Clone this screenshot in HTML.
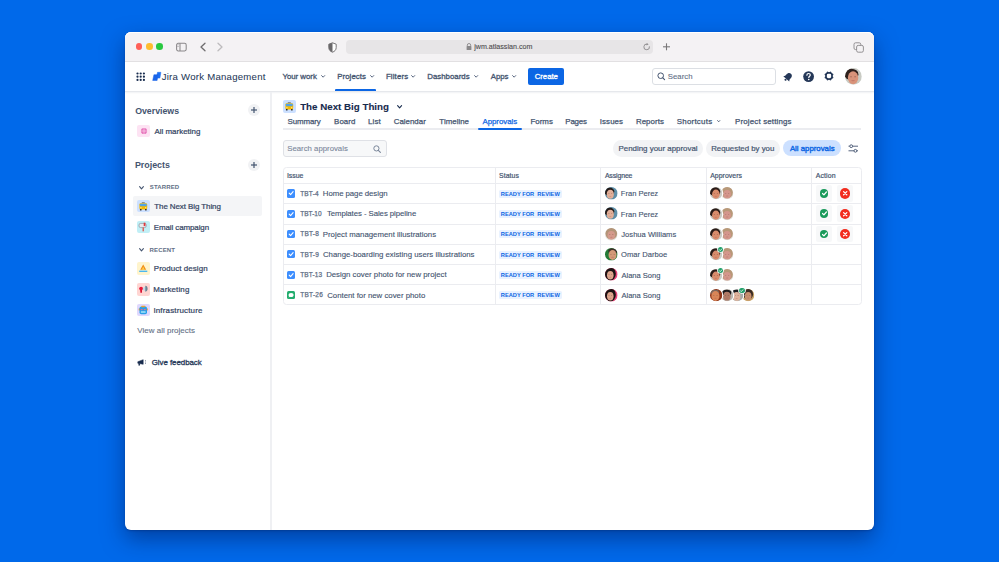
<!DOCTYPE html>
<html><head><meta charset="utf-8"><style>
html,body{margin:0;padding:0;width:999px;height:562px;overflow:hidden;}
body{background:#0069ea;position:relative;font-family:"Liberation Sans",sans-serif;}
.t{position:absolute;white-space:nowrap;line-height:normal;font-family:"Liberation Sans",sans-serif;}
svg{overflow:visible;}
</style></head><body>
<div style="position:absolute;left:125px;top:32px;width:749px;height:497.5px;background:#fff;border-radius:6px;box-shadow:0 9px 22px rgba(0,25,90,.5),0 1px 2px rgba(0,25,90,.3);"></div>
<div style="position:absolute;left:125px;top:32px;width:749px;height:30px;background:#f4f2f4;border-radius:6px 6px 0 0;border-bottom:1px solid #e2e0e2;box-sizing:border-box;box-shadow:inset 0 1px 0 #fff;"></div>
<div style="position:absolute;left:135.7px;top:43.400000000000006px;width:6.600000000000023px;height:6.599999999999994px;background:#ff5f57;border-radius:50%;"></div>
<div style="position:absolute;left:146.0px;top:43.400000000000006px;width:6.600000000000023px;height:6.599999999999994px;background:#febc2e;border-radius:50%;"></div>
<div style="position:absolute;left:156.39999999999998px;top:43.400000000000006px;width:6.600000000000023px;height:6.599999999999994px;background:#28c840;border-radius:50%;"></div>
<svg style="position:absolute;left:175px;top:42px;" width="13" height="10" viewBox="0 0 13 10"><rect x="1.6" y="1.3" width="9.6" height="7.6" rx="1.6" fill="none" stroke="#8a888a" stroke-width="1.05"/><line x1="5" y1="1.3" x2="5" y2="8.9" stroke="#8a888a" stroke-width="1.05"/><rect x="2.2" y="2.4" width="1.6" height="0.8" fill="#b0aeb0"/><rect x="2.2" y="4.1" width="1.6" height="0.8" fill="#b0aeb0"/></svg>
<svg style="position:absolute;left:199px;top:42px;" width="8" height="10" viewBox="0 0 8 10"><polyline points="6,1.2 2,5 6,8.8" fill="none" stroke="#6e6c6e" stroke-width="1.3" stroke-linecap="round" stroke-linejoin="round"/></svg>
<svg style="position:absolute;left:216px;top:42px;" width="8" height="10" viewBox="0 0 8 10"><polyline points="2,1.2 6,5 2,8.8" fill="none" stroke="#bdbbbd" stroke-width="1.3" stroke-linecap="round" stroke-linejoin="round"/></svg>
<svg style="position:absolute;left:328px;top:41.5px;" width="9" height="11" viewBox="0 0 9 11"><path d="M4.5 0.8 L8.2 2.2 L8.2 5.6 C8.2 8 6.6 9.4 4.5 10.2 C2.4 9.4 0.8 8 0.8 5.6 L0.8 2.2 Z" fill="#fff" stroke="#6a686a" stroke-width="0.9"/><path d="M4.5 0.8 L0.8 2.2 L0.8 5.6 C0.8 8 2.4 9.4 4.5 10.2 Z" fill="#6a686a"/></svg>
<div style="position:absolute;left:346px;top:40px;width:307px;height:14px;background:#e7e5e7;border-radius:4px;"></div>
<svg style="position:absolute;left:466px;top:43px;" width="6" height="7.5" viewBox="0 0 6 7.5"><path d="M1.3 3.2 V2.2 A1.7 1.7 0 0 1 4.7 2.2 V3.2" fill="none" stroke="#8a888a" stroke-width="0.9"/><rect x="0.6" y="3.1" width="4.8" height="3.9" rx="0.6" fill="#8a888a"/></svg>
<div class="t" style="left:474.16px;top:42.94px;font-size:7.134px;font-weight:400;color:#4d4b4d;-webkit-text-stroke:0.1px #4d4b4d;">jwm.atlassian.com</div>
<svg style="position:absolute;left:643px;top:43px;" width="8" height="8" viewBox="0 0 8 8"><path d="M6.4 3.4 A2.8 2.8 0 1 1 4.2 1.2" fill="none" stroke="#8a888a" stroke-width="0.9"/><path d="M3.6 0 L5.6 1.3 L3.6 2.6 Z" fill="#8a888a"/></svg>
<svg style="position:absolute;left:662px;top:43px;" width="9" height="8" viewBox="0 0 9 8"><line x1="4.5" y1="0.3" x2="4.5" y2="7.3" stroke="#7a787a" stroke-width="1.1"/><line x1="1" y1="3.8" x2="8" y2="3.8" stroke="#7a787a" stroke-width="1.1"/></svg>
<svg style="position:absolute;left:853px;top:41.5px;" width="12" height="11" viewBox="0 0 12 11"><rect x="1" y="0.8" width="6.8" height="6.8" rx="1.6" fill="#f4f2f4" stroke="#8a888a" stroke-width="0.9"/><rect x="3.6" y="3.4" width="6.8" height="6.8" rx="1.6" fill="#f4f2f4" stroke="#8a888a" stroke-width="0.9"/></svg>
<div style="position:absolute;left:125px;top:91px;width:749px;height:1px;background:#e6e8ec;box-shadow:0 1px 1.5px rgba(9,30,66,.07);"></div>
<svg style="position:absolute;left:135.8px;top:71.8px;" width="9.5" height="9.5" viewBox="0 0 9.5 9.5"><circle cx="1.50" cy="1.50" r="1.1" fill="#172b4d"/><circle cx="1.50" cy="4.70" r="1.1" fill="#172b4d"/><circle cx="1.50" cy="7.90" r="1.1" fill="#172b4d"/><circle cx="4.70" cy="1.50" r="1.1" fill="#172b4d"/><circle cx="4.70" cy="4.70" r="1.1" fill="#172b4d"/><circle cx="4.70" cy="7.90" r="1.1" fill="#172b4d"/><circle cx="7.90" cy="1.50" r="1.1" fill="#172b4d"/><circle cx="7.90" cy="4.70" r="1.1" fill="#172b4d"/><circle cx="7.90" cy="7.90" r="1.1" fill="#172b4d"/></svg>
<svg style="position:absolute;left:151.5px;top:71.5px;" width="9.5" height="9" viewBox="0 0 9.5 9"><path d="M5.5 0.3 L8.9 0.3 L7.9 6.1 L4.3 6.1 Z" fill="#1d6ff2" stroke="#1d6ff2" stroke-width="0.5" stroke-linejoin="round"/><path d="M1.9 2.7 L6.1 2.7 L5.1 8.5 L0.7 8.5 Z" fill="#1a64e8" stroke="#1a64e8" stroke-width="0.5" stroke-linejoin="round"/></svg>
<div class="t" style="left:161.63px;top:70.81px;font-size:9.600px;font-weight:400;color:#253858;-webkit-text-stroke:0.05px #253858;letter-spacing:0.251px;">Jira Work Management</div>
<div class="t" style="left:282.49px;top:72.20px;font-size:7.850px;font-weight:400;color:#44546f;-webkit-text-stroke:0.3px #44546f;letter-spacing:-0.033px;">Your work</div>
<svg style="position:absolute;left:320.8px;top:75.4px;" width="4.3" height="3.0" viewBox="0 0 4.3 3.0"><polyline points="0.6,0.6 2.15,2.2 3.6999999999999997,0.6" fill="none" stroke="#44546f" stroke-width="0.9" stroke-linecap="round" stroke-linejoin="round"/></svg>
<div class="t" style="left:337.32px;top:72.20px;font-size:7.850px;font-weight:400;color:#44546f;-webkit-text-stroke:0.3px #44546f;letter-spacing:0.032px;">Projects</div>
<svg style="position:absolute;left:369.8px;top:75.4px;" width="4.3" height="3.0" viewBox="0 0 4.3 3.0"><polyline points="0.6,0.6 2.15,2.2 3.6999999999999997,0.6" fill="none" stroke="#44546f" stroke-width="0.9" stroke-linecap="round" stroke-linejoin="round"/></svg>
<div class="t" style="left:385.92px;top:72.20px;font-size:7.850px;font-weight:400;color:#44546f;-webkit-text-stroke:0.3px #44546f;letter-spacing:0.135px;">Filters</div>
<svg style="position:absolute;left:411.0px;top:75.4px;" width="4.3" height="3.0" viewBox="0 0 4.3 3.0"><polyline points="0.6,0.6 2.15,2.2 3.6999999999999997,0.6" fill="none" stroke="#44546f" stroke-width="0.9" stroke-linecap="round" stroke-linejoin="round"/></svg>
<div class="t" style="left:427.32px;top:72.20px;font-size:7.850px;font-weight:400;color:#44546f;-webkit-text-stroke:0.3px #44546f;letter-spacing:-0.005px;">Dashboards</div>
<svg style="position:absolute;left:473.8px;top:75.4px;" width="4.3" height="3.0" viewBox="0 0 4.3 3.0"><polyline points="0.6,0.6 2.15,2.2 3.6999999999999997,0.6" fill="none" stroke="#44546f" stroke-width="0.9" stroke-linecap="round" stroke-linejoin="round"/></svg>
<div class="t" style="left:490.75px;top:72.20px;font-size:7.850px;font-weight:400;color:#44546f;-webkit-text-stroke:0.3px #44546f;letter-spacing:-0.061px;">Apps</div>
<svg style="position:absolute;left:512.0px;top:75.4px;" width="4.3" height="3.0" viewBox="0 0 4.3 3.0"><polyline points="0.6,0.6 2.15,2.2 3.6999999999999997,0.6" fill="none" stroke="#44546f" stroke-width="0.9" stroke-linecap="round" stroke-linejoin="round"/></svg>
<div style="position:absolute;left:335px;top:89px;width:40.60000000000002px;height:2px;background:#0c66e4;border-radius:1px 1px 0 0;"></div>
<div style="position:absolute;left:528px;top:68.3px;width:36.39999999999998px;height:16.700000000000003px;background:#0c66e4;border-radius:2px;"></div>
<div class="t" style="left:534.66px;top:72.24px;font-size:7.800px;font-weight:400;color:#fff;-webkit-text-stroke:0.3px #fff;letter-spacing:-0.020px;">Create</div>
<div style="position:absolute;left:651.5px;top:68px;width:124.0px;height:16.5px;border:1px solid #dcdfe4;border-radius:3px;box-sizing:border-box;background:#fff;"></div>
<svg style="position:absolute;left:656.5px;top:72.2px;" width="9" height="9" viewBox="0 0 9 9"><circle cx="3.7" cy="3.7" r="2.8" fill="none" stroke="#44546f" stroke-width="1.0"/><line x1="5.8" y1="5.8" x2="7.6" y2="7.6" stroke="#44546f" stroke-width="1.1" stroke-linecap="round"/></svg>
<div class="t" style="left:667.86px;top:71.87px;font-size:7.770px;font-weight:400;color:#626f86;-webkit-text-stroke:0.1px #626f86;">Search</div>
<svg style="position:absolute;left:783px;top:71.5px;" width="10" height="10" viewBox="0 0 10 10"><g transform="rotate(42 5 5)"><path d="M5 0.6 C3 0.6 2.1 2.2 2.1 4.2 L2.1 6 L1 7.6 L9 7.6 L7.9 6 L7.9 4.2 C7.9 2.2 7 0.6 5 0.6 Z" fill="#253858"/><circle cx="5" cy="8.7" r="1.05" fill="#253858"/></g></svg>
<svg style="position:absolute;left:803px;top:71px;" width="11.5" height="11.5" viewBox="0 0 11.5 11.5"><circle cx="5.6" cy="5.6" r="5.4" fill="#253858"/><path d="M3.9 4.2 C3.9 3.1 4.7 2.5 5.6 2.5 C6.6 2.5 7.3 3.1 7.3 4 C7.3 5.2 5.8 5.2 5.8 6.5" fill="none" stroke="#fff" stroke-width="1.2" stroke-linecap="round"/><circle cx="5.75" cy="8.5" r="0.8" fill="#fff"/></svg>
<svg style="position:absolute;left:824.2px;top:71.4px;" width="10" height="10" viewBox="0 0 10 10"><rect x="4.2" y="0.4" width="1.6" height="2.2" rx="0.3" fill="#253858" transform="rotate(22.5 5 5)"/><rect x="4.2" y="0.4" width="1.6" height="2.2" rx="0.3" fill="#253858" transform="rotate(67.5 5 5)"/><rect x="4.2" y="0.4" width="1.6" height="2.2" rx="0.3" fill="#253858" transform="rotate(112.5 5 5)"/><rect x="4.2" y="0.4" width="1.6" height="2.2" rx="0.3" fill="#253858" transform="rotate(157.5 5 5)"/><rect x="4.2" y="0.4" width="1.6" height="2.2" rx="0.3" fill="#253858" transform="rotate(202.5 5 5)"/><rect x="4.2" y="0.4" width="1.6" height="2.2" rx="0.3" fill="#253858" transform="rotate(247.5 5 5)"/><rect x="4.2" y="0.4" width="1.6" height="2.2" rx="0.3" fill="#253858" transform="rotate(292.5 5 5)"/><rect x="4.2" y="0.4" width="1.6" height="2.2" rx="0.3" fill="#253858" transform="rotate(337.5 5 5)"/><circle cx="5" cy="5" r="3.15" fill="none" stroke="#253858" stroke-width="1.5"/></svg>
<svg style="position:absolute;left:845.10px;top:68.10px;overflow:visible" width="16.8" height="16.8" viewBox="0 0 100 100"><defs><clipPath id="av1"><circle cx="50" cy="50" r="50"/></clipPath></defs><g clip-path="url(#av1)"><rect width="100" height="100" fill="#c9cbc4"/><ellipse cx="38" cy="38" rx="42" ry="34" fill="#2e201c"/><ellipse cx="48" cy="58" rx="31" ry="38" fill="#d9937a"/><ellipse cx="35.6" cy="52.3" rx="5.6" ry="3.0" fill="#6a4236" opacity=".55"/><ellipse cx="60.4" cy="52.3" rx="5.6" ry="3.0" fill="#6a4236" opacity=".55"/><ellipse cx="48" cy="75.1" rx="10.8" ry="3.8" fill="#b0605a" opacity=".5"/></g></svg>
<div style="position:absolute;left:270.3px;top:92px;width:2.0px;height:437.5px;background:#eff0f3;"></div>
<div class="t" style="left:135.15px;top:105.54px;font-size:8.791px;font-weight:700;color:#44546f;">Overviews</div>
<div style="position:absolute;left:248px;top:104px;width:12px;height:12px;background:#f1f2f4;border-radius:50%;"></div>
<svg style="position:absolute;left:250px;top:106px;" width="8" height="8" viewBox="0 0 8 8"><line x1="4" y1="1" x2="4" y2="7" stroke="#44546f" stroke-width="1.2"/><line x1="1" y1="4" x2="7" y2="4" stroke="#44546f" stroke-width="1.2"/></svg>
<div style="position:absolute;left:137.3px;top:124.7px;width:12.5px;height:12.600000000000009px;background:#fde3f3;border-radius:2px;"></div>
<svg style="position:absolute;left:139.5px;top:127px;" width="8" height="8" viewBox="0 0 8 8"><circle cx="4" cy="4" r="3.1" fill="#e774bb"/><line x1="0.9" y1="4" x2="7.1" y2="4" stroke="#fde3f3" stroke-width="0.6"/><line x1="4" y1="0.9" x2="4" y2="7.1" stroke="#fde3f3" stroke-width="0.6"/></svg>
<div class="t" style="left:154.41px;top:127.11px;font-size:7.950px;font-weight:400;color:#344563;-webkit-text-stroke:0.22px #344563;letter-spacing:0.007px;">All marketing</div>
<div class="t" style="left:134.88px;top:159.64px;font-size:8.906px;font-weight:700;color:#44546f;">Projects</div>
<div style="position:absolute;left:248px;top:158.7px;width:12px;height:12.0px;background:#f1f2f4;border-radius:50%;"></div>
<svg style="position:absolute;left:250px;top:160.7px;" width="8" height="8" viewBox="0 0 8 8"><line x1="4" y1="1" x2="4" y2="7" stroke="#44546f" stroke-width="1.2"/><line x1="1" y1="4" x2="7" y2="4" stroke="#44546f" stroke-width="1.2"/></svg>
<svg style="position:absolute;left:139.0px;top:185.5px;" width="5" height="3.6" viewBox="0 0 5 3.6"><polyline points="0.6,0.6 2.5,2.8000000000000003 4.4,0.6" fill="none" stroke="#44546f" stroke-width="1.1" stroke-linecap="round" stroke-linejoin="round"/></svg>
<div class="t" style="left:149.82px;top:184.34px;font-size:6.029px;font-weight:700;color:#626f86;letter-spacing:0.121px;">STARRED</div>
<div style="position:absolute;left:133.3px;top:195.8px;width:128.7px;height:20.5px;background:#f4f5f7;border-radius:2px;"></div>
<div style="position:absolute;left:137.3px;top:199.8px;width:12.5px;height:12.5px;background:#cce0ff;border-radius:2px;"></div>
<svg style="position:absolute;left:137.3px;top:199.8px;" width="12.5" height="12.5" viewBox="0 0 12.5 12.5"><rect x="4.7" y="2.1" width="3.2" height="1.3" rx="0.4" fill="#8a8f98"/><rect x="2.4" y="3.2" width="7.8" height="6.2" rx="1.3" fill="#f5b800"/><rect x="2.9" y="3.8" width="6.8" height="2.4" rx="0.7" fill="#4fa3e6"/><rect x="2.9" y="9.1" width="1.7" height="1.3" rx="0.3" fill="#2b2b2b"/><rect x="8" y="9.1" width="1.7" height="1.3" rx="0.3" fill="#2b2b2b"/><rect x="3.3" y="7.3" width="1.2" height="0.9" fill="#fff3c0"/><rect x="8.1" y="7.3" width="1.2" height="0.9" fill="#fff3c0"/></svg>
<div class="t" style="left:154.25px;top:202.11px;font-size:7.950px;font-weight:400;color:#344563;-webkit-text-stroke:0.22px #344563;letter-spacing:-0.069px;">The Next Big Thing</div>
<div style="position:absolute;left:137.3px;top:220.8px;width:12.5px;height:12.5px;background:#c1eff6;border-radius:2px;"></div>
<svg style="position:absolute;left:137.3px;top:220.8px;" width="12.5" height="12.5" viewBox="0 0 12.5 12.5"><rect x="2" y="2.4" width="7.2" height="4.2" rx="1.6" fill="#e8eaee" stroke="#8d939c" stroke-width="0.7"/><rect x="6.7" y="1.7" width="1.7" height="3.4" fill="#e2383d"/><rect x="5.6" y="6.5" width="1.2" height="3.8" fill="#e2483d"/></svg>
<div class="t" style="left:153.77px;top:222.61px;font-size:7.950px;font-weight:400;color:#344563;-webkit-text-stroke:0.22px #344563;letter-spacing:-0.087px;">Email campaign</div>
<svg style="position:absolute;left:139.0px;top:248.2px;" width="5" height="3.6" viewBox="0 0 5 3.6"><polyline points="0.6,0.6 2.5,2.8000000000000003 4.4,0.6" fill="none" stroke="#44546f" stroke-width="1.1" stroke-linecap="round" stroke-linejoin="round"/></svg>
<div class="t" style="left:149.58px;top:246.52px;font-size:6.053px;font-weight:700;color:#626f86;letter-spacing:0.121px;">RECENT</div>
<div style="position:absolute;left:137.3px;top:262.2px;width:12.5px;height:12.5px;background:#fff4cc;border-radius:2px;"></div>
<svg style="position:absolute;left:137.3px;top:262.2px;" width="12.5" height="12.5" viewBox="0 0 12.5 12.5"><path d="M6.2 2.5 L9.2 7.8 L3.2 7.8 Z" fill="#f18d13"/><path d="M6.2 4.6 L7.6 7.8 L4.8 7.8 Z" fill="#ffd24d"/><rect x="2.2" y="8.6" width="8.1" height="1.4" fill="#4bb8ef"/></svg>
<div class="t" style="left:153.77px;top:264.31px;font-size:7.950px;font-weight:400;color:#344563;-webkit-text-stroke:0.22px #344563;letter-spacing:0.067px;">Product design</div>
<div style="position:absolute;left:137.3px;top:283px;width:12.5px;height:12.5px;background:#ffd5d2;border-radius:2px;"></div>
<svg style="position:absolute;left:137.3px;top:283px;" width="12.5" height="12.5" viewBox="0 0 12.5 12.5"><circle cx="4.1" cy="5.6" r="1.9" fill="#e8173a"/><rect x="3.3" y="6.8" width="1.7" height="3" rx="0.5" fill="#d90f30"/><path d="M5.8 5.4 L8.7 2.9 L8.7 8.5 L5.8 6.6 Z" fill="#bfdbe6"/><path d="M8.3 2.7 C10.2 2.8 10.6 4.6 10.6 5.7 C10.6 6.8 10.2 8.5 8.3 8.7 Z" fill="#6a8392"/></svg>
<div class="t" style="left:153.37px;top:284.51px;font-size:7.950px;font-weight:400;color:#344563;-webkit-text-stroke:0.22px #344563;letter-spacing:0.137px;">Marketing</div>
<div style="position:absolute;left:137.3px;top:303.8px;width:12.5px;height:12.5px;background:#dfd8fd;border-radius:2px;"></div>
<svg style="position:absolute;left:137.3px;top:303.8px;" width="12.5" height="12.5" viewBox="0 0 12.5 12.5"><rect x="1.7" y="4.2" width="1.4" height="2.3" rx="0.6" fill="#f0a030"/><rect x="9.4" y="4.2" width="1.4" height="2.3" rx="0.6" fill="#f0a030"/><rect x="2.5" y="2.5" width="7.5" height="7.8" rx="1.8" fill="#2a9fe8"/><rect x="4.2" y="1.8" width="4.2" height="1.4" rx="0.7" fill="#e9a23b"/><rect x="3.7" y="4.9" width="2" height="1.3" rx="0.6" fill="#f06a8a"/><rect x="6.9" y="4.9" width="2" height="1.3" rx="0.6" fill="#f06a8a"/><rect x="3.8" y="7.3" width="4.9" height="1.4" rx="0.5" fill="#a8e6f8"/></svg>
<div class="t" style="left:153.39px;top:305.61px;font-size:7.950px;font-weight:400;color:#344563;-webkit-text-stroke:0.22px #344563;letter-spacing:0.176px;">Infrastructure</div>
<div class="t" style="left:137.27px;top:326.31px;font-size:7.950px;font-weight:400;color:#626f86;-webkit-text-stroke:0.1px #626f86;letter-spacing:0.030px;">View all projects</div>
<svg style="position:absolute;left:136.5px;top:358.5px;" width="10" height="8" viewBox="0 0 10 8"><path d="M0.8 2.7 L6.2 0.7 L6.2 5.3 L0.8 4.3 Z" fill="#172b4d" stroke="#172b4d" stroke-width="0.5" stroke-linejoin="round"/><path d="M1.5 4.3 L3.2 4.6 L2.6 6.8 L1.5 6.6 Z" fill="#172b4d"/><line x1="8" y1="1.6" x2="8.8" y2="1.4" stroke="#172b4d" stroke-width="0.55"/><line x1="8" y1="3.0" x2="8.9" y2="3.0" stroke="#172b4d" stroke-width="0.55"/><line x1="8" y1="4.4" x2="8.8" y2="4.6" stroke="#172b4d" stroke-width="0.55"/></svg>
<div class="t" style="left:151.75px;top:357.65px;font-size:7.900px;font-weight:400;color:#253858;-webkit-text-stroke:0.3px #253858;letter-spacing:-0.040px;">Give feedback</div>
<div style="position:absolute;left:283.3px;top:100.3px;width:12.5px;height:12.5px;background:#cce0ff;border-radius:2px;"></div>
<svg style="position:absolute;left:283.3px;top:100.3px;" width="12.5" height="12.5" viewBox="0 0 12.5 12.5"><rect x="4.7" y="2.1" width="3.2" height="1.3" rx="0.4" fill="#8a8f98"/><rect x="2.4" y="3.2" width="7.8" height="6.2" rx="1.3" fill="#f5b800"/><rect x="2.9" y="3.8" width="6.8" height="2.4" rx="0.7" fill="#4fa3e6"/><rect x="2.9" y="9.1" width="1.7" height="1.3" rx="0.3" fill="#2b2b2b"/><rect x="8" y="9.1" width="1.7" height="1.3" rx="0.3" fill="#2b2b2b"/><rect x="3.3" y="7.3" width="1.2" height="0.9" fill="#fff3c0"/><rect x="8.1" y="7.3" width="1.2" height="0.9" fill="#fff3c0"/></svg>
<div class="t" style="left:300.15px;top:101.47px;font-size:9.756px;font-weight:700;color:#172b4d;-webkit-text-stroke:0.1px #172b4d;">The Next Big Thing</div>
<svg style="position:absolute;left:397.0px;top:105.1px;" width="5.2" height="3.6" viewBox="0 0 5.2 3.6"><polyline points="0.6,0.6 2.6,2.8000000000000003 4.6000000000000005,0.6" fill="none" stroke="#172b4d" stroke-width="1.1" stroke-linecap="round" stroke-linejoin="round"/></svg>
<div style="position:absolute;left:283.3px;top:128px;width:577.7px;height:2px;background:#ebecf0;"></div>
<div class="t" style="left:287.53px;top:116.65px;font-size:7.900px;font-weight:400;color:#44546f;-webkit-text-stroke:0.25px #44546f;letter-spacing:-0.098px;">Summary</div>
<div class="t" style="left:334.09px;top:116.65px;font-size:7.900px;font-weight:400;color:#44546f;-webkit-text-stroke:0.25px #44546f;letter-spacing:0.035px;">Board</div>
<div class="t" style="left:367.89px;top:116.65px;font-size:7.900px;font-weight:400;color:#44546f;-webkit-text-stroke:0.25px #44546f;letter-spacing:0.212px;">List</div>
<div class="t" style="left:393.73px;top:116.65px;font-size:7.900px;font-weight:400;color:#44546f;-webkit-text-stroke:0.25px #44546f;letter-spacing:0.004px;">Calendar</div>
<div class="t" style="left:439.37px;top:116.65px;font-size:7.900px;font-weight:400;color:#44546f;-webkit-text-stroke:0.25px #44546f;letter-spacing:0.011px;">Timeline</div>
<div class="t" style="left:482.43px;top:116.65px;font-size:7.900px;font-weight:400;color:#0c66e4;-webkit-text-stroke:0.25px #0c66e4;letter-spacing:-0.036px;">Approvals</div>
<div class="t" style="left:530.49px;top:116.65px;font-size:7.900px;font-weight:400;color:#44546f;-webkit-text-stroke:0.25px #44546f;letter-spacing:0.015px;">Forms</div>
<div class="t" style="left:565.29px;top:116.65px;font-size:7.900px;font-weight:400;color:#44546f;-webkit-text-stroke:0.25px #44546f;letter-spacing:-0.159px;">Pages</div>
<div class="t" style="left:599.81px;top:116.65px;font-size:7.900px;font-weight:400;color:#44546f;-webkit-text-stroke:0.25px #44546f;letter-spacing:0.089px;">Issues</div>
<div class="t" style="left:635.89px;top:116.65px;font-size:7.900px;font-weight:400;color:#44546f;-webkit-text-stroke:0.25px #44546f;letter-spacing:0.078px;">Reports</div>
<div class="t" style="left:676.73px;top:116.65px;font-size:7.900px;font-weight:400;color:#44546f;-webkit-text-stroke:0.25px #44546f;letter-spacing:0.256px;">Shortcuts</div>
<div class="t" style="left:735.09px;top:116.65px;font-size:7.900px;font-weight:400;color:#44546f;-webkit-text-stroke:0.25px #44546f;letter-spacing:0.164px;">Project settings</div>
<svg style="position:absolute;left:716.7px;top:120.0px;" width="3.4" height="2.6" viewBox="0 0 3.4 2.6"><polyline points="0.6,0.6 1.7,1.8 2.8,0.6" fill="none" stroke="#44546f" stroke-width="0.9" stroke-linecap="round" stroke-linejoin="round"/></svg>
<div style="position:absolute;left:477.8px;top:128px;width:43.80000000000001px;height:2px;background:#0c66e4;border-radius:1px;"></div>
<div style="position:absolute;left:283px;top:139.8px;width:104px;height:17.19999999999999px;background:#f7f8f9;border:1px solid #dfe1e6;border-radius:3px;box-sizing:border-box;"></div>
<div class="t" style="left:287.26px;top:143.95px;font-size:7.792px;font-weight:400;color:#7a869a;-webkit-text-stroke:0.1px #7a869a;">Search approvals</div>
<svg style="position:absolute;left:372.8px;top:145px;" width="8.5" height="8.5" viewBox="0 0 8.5 8.5"><circle cx="3.4" cy="3.4" r="2.6" fill="none" stroke="#7a869a" stroke-width="1"/><line x1="5.3" y1="5.3" x2="7.4" y2="7.4" stroke="#7a869a" stroke-width="1.1" stroke-linecap="round"/></svg>
<div style="position:absolute;left:612.8px;top:140px;width:90.5px;height:16.599999999999994px;background:#f2f3f5;border-radius:8.3px;"></div>
<div class="t" style="left:618.47px;top:143.83px;font-size:7.921px;font-weight:400;color:#44546f;-webkit-text-stroke:0.2px #44546f;">Pending your approval</div>
<div style="position:absolute;left:705.8px;top:140px;width:74.40000000000009px;height:16.599999999999994px;background:#f2f3f5;border-radius:8.3px;"></div>
<div class="t" style="left:711.17px;top:143.90px;font-size:7.841px;font-weight:400;color:#44546f;-webkit-text-stroke:0.2px #44546f;">Requested by you</div>
<div style="position:absolute;left:783.2px;top:140.2px;width:57.799999999999955px;height:16.30000000000001px;background:#cce0ff;border-radius:8.3px;"></div>
<div class="t" style="left:789.90px;top:143.94px;font-size:7.803px;font-weight:400;color:#0c66e4;-webkit-text-stroke:0.4px #0c66e4;">All approvals</div>
<svg style="position:absolute;left:848px;top:144px;" width="11" height="9" viewBox="0 0 11 9"><line x1="0.5" y1="2.2" x2="10" y2="2.2" stroke="#44546f" stroke-width="0.9"/><line x1="0.5" y1="6.8" x2="10" y2="6.8" stroke="#44546f" stroke-width="0.9"/><circle cx="3.2" cy="2.2" r="1.4" fill="#fff" stroke="#44546f" stroke-width="0.9"/><circle cx="7.4" cy="6.8" r="1.4" fill="#fff" stroke="#44546f" stroke-width="0.9"/></svg>
<div style="position:absolute;left:283px;top:167px;width:578.7px;height:138.39999999999998px;border:1px solid #ebecf0;border-radius:3.5px;box-sizing:border-box;"></div>
<div style="position:absolute;left:284px;top:182.9px;width:577px;height:1.0px;background:#ebecf0;"></div>
<div style="position:absolute;left:284px;top:203.1px;width:577px;height:1.0px;background:#ebecf0;"></div>
<div style="position:absolute;left:284px;top:223.5px;width:577px;height:1.0px;background:#ebecf0;"></div>
<div style="position:absolute;left:284px;top:243.8px;width:577px;height:1.0px;background:#ebecf0;"></div>
<div style="position:absolute;left:284px;top:264.1px;width:577px;height:1.0px;background:#ebecf0;"></div>
<div style="position:absolute;left:284px;top:284.3px;width:577px;height:1.0px;background:#ebecf0;"></div>
<div style="position:absolute;left:494.8px;top:168px;width:1.0px;height:136.5px;background:#ebecf0;"></div>
<div style="position:absolute;left:599.8px;top:168px;width:1.0px;height:136.5px;background:#ebecf0;"></div>
<div style="position:absolute;left:706.0px;top:168px;width:1.0px;height:136.5px;background:#ebecf0;"></div>
<div style="position:absolute;left:811.1px;top:168px;width:1.0px;height:136.5px;background:#ebecf0;"></div>
<div class="t" style="left:286.88px;top:171.76px;font-size:6.900px;font-weight:400;color:#44546f;-webkit-text-stroke:0.2px #44546f;letter-spacing:0.002px;">Issue</div>
<div class="t" style="left:499.06px;top:171.76px;font-size:6.900px;font-weight:400;color:#44546f;-webkit-text-stroke:0.2px #44546f;letter-spacing:0.065px;">Status</div>
<div class="t" style="left:604.90px;top:171.76px;font-size:6.900px;font-weight:400;color:#44546f;-webkit-text-stroke:0.2px #44546f;letter-spacing:-0.112px;">Assignee</div>
<div class="t" style="left:710.20px;top:171.76px;font-size:6.900px;font-weight:400;color:#44546f;-webkit-text-stroke:0.2px #44546f;letter-spacing:0.051px;">Approvers</div>
<div class="t" style="left:815.70px;top:171.76px;font-size:6.900px;font-weight:400;color:#44546f;-webkit-text-stroke:0.2px #44546f;letter-spacing:0.160px;">Action</div>
<div style="position:absolute;left:287.2px;top:189.4px;width:8.199999999999989px;height:8.199999999999989px;background:#3d8efe;border-radius:1.5px;"></div>
<svg style="position:absolute;left:287.2px;top:189.4px;" width="8.2" height="8.2" viewBox="0 0 8.2 8.2"><polyline points="2.2,4.2 3.6,5.6 6.1,2.7" fill="none" stroke="#fff" stroke-width="1.1" stroke-linecap="round" stroke-linejoin="round"/></svg>
<div class="t" style="left:300.19px;top:189.82px;font-size:6.500px;font-weight:400;color:#626f86;-webkit-text-stroke:0.25px #626f86;letter-spacing:0.183px;">TBT-4</div>
<div class="t" style="left:322.84px;top:189.24px;font-size:7.800px;font-weight:400;color:#44546f;-webkit-text-stroke:0.12px #44546f;letter-spacing:-0.051px;">Home page design</div>
<div style="position:absolute;left:499.4px;top:189.6px;width:62.5px;height:8.200000000000017px;background:#e9f2ff;border-radius:1.5px;"></div>
<div class="t" style="left:500.80px;top:190.64px;font-size:5.699px;font-weight:700;color:#0c66e4;white-space:pre;">READY FOR&nbsp; REVIEW</div>
<svg style="position:absolute;left:604.60px;top:187.20px;overflow:visible" width="12.6" height="12.6" viewBox="0 0 100 100"><defs><clipPath id="av2"><circle cx="50" cy="50" r="50"/></clipPath></defs><g clip-path="url(#av2)"><rect width="100" height="100" fill="#5f8fa8"/><ellipse cx="34" cy="36" rx="40" ry="32" fill="#221a18"/><ellipse cx="42" cy="58" rx="28" ry="36" fill="#e0ae98"/><ellipse cx="30.8" cy="52.6" rx="5.0" ry="2.9" fill="#6a4236" opacity=".55"/><ellipse cx="53.2" cy="52.6" rx="5.0" ry="2.9" fill="#6a4236" opacity=".55"/><ellipse cx="42" cy="74.2" rx="9.8" ry="3.6" fill="#b0605a" opacity=".5"/></g></svg>
<div class="t" style="left:620.85px;top:189.42px;font-size:7.600px;font-weight:400;color:#44546f;-webkit-text-stroke:0.12px #44546f;letter-spacing:-0.028px;">Fran Perez</div>
<svg style="position:absolute;left:720.60px;top:187.35px;overflow:visible" width="12.3" height="12.3" viewBox="0 0 100 100"><defs><clipPath id="av3"><circle cx="50" cy="50" r="50"/></clipPath></defs><circle cx="50" cy="50" r="58" fill="#fff"/><g clip-path="url(#av3)"><rect width="100" height="100" fill="#e0d8d0"/><ellipse cx="50" cy="44" rx="46" ry="48" fill="#b89878"/><ellipse cx="50" cy="58" rx="30" ry="34" fill="#d4968c"/><ellipse cx="38.0" cy="52.9" rx="5.4" ry="2.7" fill="#6a4236" opacity=".55"/><ellipse cx="62.0" cy="52.9" rx="5.4" ry="2.7" fill="#6a4236" opacity=".55"/><ellipse cx="50" cy="73.3" rx="10.5" ry="3.4" fill="#b0605a" opacity=".5"/></g></svg>
<svg style="position:absolute;left:709.95px;top:187.35px;overflow:visible" width="12.3" height="12.3" viewBox="0 0 100 100"><defs><clipPath id="av4"><circle cx="50" cy="50" r="50"/></clipPath></defs><circle cx="50" cy="50" r="58" fill="#fff"/><g clip-path="url(#av4)"><rect width="100" height="100" fill="#c9cac4"/><ellipse cx="40" cy="38" rx="44" ry="36" fill="#2a1c18"/><ellipse cx="48" cy="58" rx="31" ry="37" fill="#d98c6c"/><ellipse cx="35.6" cy="52.5" rx="5.6" ry="3.0" fill="#6a4236" opacity=".55"/><ellipse cx="60.4" cy="52.5" rx="5.6" ry="3.0" fill="#6a4236" opacity=".55"/><ellipse cx="48" cy="74.7" rx="10.8" ry="3.7" fill="#b0605a" opacity=".5"/></g></svg>
<div style="position:absolute;left:816px;top:185.20000000000002px;width:16.299999999999955px;height:16.5px;background:#f7f8f9;border-radius:2px;"></div>
<div style="position:absolute;left:836.8px;top:185.20000000000002px;width:16.600000000000023px;height:16.5px;background:#f7f8f9;border-radius:2px;"></div>
<div style="position:absolute;left:819.7px;top:189.1px;width:8.799999999999955px;height:8.800000000000011px;background:#1a9a5a;border-radius:50%;"></div>
<svg style="position:absolute;left:819.7px;top:189.1px;" width="8.8" height="8.8" viewBox="0 0 8.8 8.8"><polyline points="2.5,4.5 3.9,5.9 6.4,3" fill="none" stroke="#fff" stroke-width="1.2" stroke-linecap="round" stroke-linejoin="round"/></svg>
<div style="position:absolute;left:839.9px;top:188.3px;width:10.399999999999977px;height:10.400000000000006px;background:#f22c1f;border-radius:50%;"></div>
<svg style="position:absolute;left:839.9px;top:188.3px;" width="10.4" height="10.4" viewBox="0 0 10.4 10.4"><path d="M3.6 3.6 L6.8 6.8 M6.8 3.6 L3.6 6.8" stroke="#fff" stroke-width="1.25" stroke-linecap="round"/></svg>
<div style="position:absolute;left:287.2px;top:209.6px;width:8.199999999999989px;height:8.199999999999989px;background:#3d8efe;border-radius:1.5px;"></div>
<svg style="position:absolute;left:287.2px;top:209.6px;" width="8.2" height="8.2" viewBox="0 0 8.2 8.2"><polyline points="2.2,4.2 3.6,5.6 6.1,2.7" fill="none" stroke="#fff" stroke-width="1.1" stroke-linecap="round" stroke-linejoin="round"/></svg>
<div class="t" style="left:300.19px;top:210.02px;font-size:6.500px;font-weight:400;color:#626f86;-webkit-text-stroke:0.25px #626f86;letter-spacing:0.024px;">TBT-10</div>
<div class="t" style="left:326.90px;top:209.44px;font-size:7.800px;font-weight:400;color:#44546f;-webkit-text-stroke:0.12px #44546f;letter-spacing:-0.067px;">Templates - Sales pipeline</div>
<div style="position:absolute;left:499.4px;top:209.79999999999998px;width:62.5px;height:8.200000000000017px;background:#e9f2ff;border-radius:1.5px;"></div>
<div class="t" style="left:500.80px;top:210.84px;font-size:5.699px;font-weight:700;color:#0c66e4;white-space:pre;">READY FOR&nbsp; REVIEW</div>
<svg style="position:absolute;left:604.60px;top:207.40px;overflow:visible" width="12.6" height="12.6" viewBox="0 0 100 100"><defs><clipPath id="av5"><circle cx="50" cy="50" r="50"/></clipPath></defs><g clip-path="url(#av5)"><rect width="100" height="100" fill="#5f8fa8"/><ellipse cx="34" cy="36" rx="40" ry="32" fill="#221a18"/><ellipse cx="42" cy="58" rx="28" ry="36" fill="#e0ae98"/><ellipse cx="30.8" cy="52.6" rx="5.0" ry="2.9" fill="#6a4236" opacity=".55"/><ellipse cx="53.2" cy="52.6" rx="5.0" ry="2.9" fill="#6a4236" opacity=".55"/><ellipse cx="42" cy="74.2" rx="9.8" ry="3.6" fill="#b0605a" opacity=".5"/></g></svg>
<div class="t" style="left:620.85px;top:209.62px;font-size:7.600px;font-weight:400;color:#44546f;-webkit-text-stroke:0.12px #44546f;letter-spacing:-0.028px;">Fran Perez</div>
<svg style="position:absolute;left:720.60px;top:207.55px;overflow:visible" width="12.3" height="12.3" viewBox="0 0 100 100"><defs><clipPath id="av6"><circle cx="50" cy="50" r="50"/></clipPath></defs><circle cx="50" cy="50" r="58" fill="#fff"/><g clip-path="url(#av6)"><rect width="100" height="100" fill="#e0d8d0"/><ellipse cx="50" cy="44" rx="46" ry="48" fill="#b89878"/><ellipse cx="50" cy="58" rx="30" ry="34" fill="#d4968c"/><ellipse cx="38.0" cy="52.9" rx="5.4" ry="2.7" fill="#6a4236" opacity=".55"/><ellipse cx="62.0" cy="52.9" rx="5.4" ry="2.7" fill="#6a4236" opacity=".55"/><ellipse cx="50" cy="73.3" rx="10.5" ry="3.4" fill="#b0605a" opacity=".5"/></g></svg>
<svg style="position:absolute;left:709.95px;top:207.55px;overflow:visible" width="12.3" height="12.3" viewBox="0 0 100 100"><defs><clipPath id="av7"><circle cx="50" cy="50" r="50"/></clipPath></defs><circle cx="50" cy="50" r="58" fill="#fff"/><g clip-path="url(#av7)"><rect width="100" height="100" fill="#c9cac4"/><ellipse cx="40" cy="38" rx="44" ry="36" fill="#2a1c18"/><ellipse cx="48" cy="58" rx="31" ry="37" fill="#d98c6c"/><ellipse cx="35.6" cy="52.5" rx="5.6" ry="3.0" fill="#6a4236" opacity=".55"/><ellipse cx="60.4" cy="52.5" rx="5.6" ry="3.0" fill="#6a4236" opacity=".55"/><ellipse cx="48" cy="74.7" rx="10.8" ry="3.7" fill="#b0605a" opacity=".5"/></g></svg>
<div style="position:absolute;left:816px;top:205.4px;width:16.299999999999955px;height:16.5px;background:#f7f8f9;border-radius:2px;"></div>
<div style="position:absolute;left:836.8px;top:205.4px;width:16.600000000000023px;height:16.5px;background:#f7f8f9;border-radius:2px;"></div>
<div style="position:absolute;left:819.7px;top:209.29999999999998px;width:8.799999999999955px;height:8.800000000000011px;background:#1a9a5a;border-radius:50%;"></div>
<svg style="position:absolute;left:819.7px;top:209.29999999999998px;" width="8.8" height="8.8" viewBox="0 0 8.8 8.8"><polyline points="2.5,4.5 3.9,5.9 6.4,3" fill="none" stroke="#fff" stroke-width="1.2" stroke-linecap="round" stroke-linejoin="round"/></svg>
<div style="position:absolute;left:839.9px;top:208.5px;width:10.399999999999977px;height:10.400000000000006px;background:#f22c1f;border-radius:50%;"></div>
<svg style="position:absolute;left:839.9px;top:208.5px;" width="10.4" height="10.4" viewBox="0 0 10.4 10.4"><path d="M3.6 3.6 L6.8 6.8 M6.8 3.6 L3.6 6.8" stroke="#fff" stroke-width="1.25" stroke-linecap="round"/></svg>
<div style="position:absolute;left:287.2px;top:230.0px;width:8.199999999999989px;height:8.199999999999989px;background:#3d8efe;border-radius:1.5px;"></div>
<svg style="position:absolute;left:287.2px;top:230.0px;" width="8.2" height="8.2" viewBox="0 0 8.2 8.2"><polyline points="2.2,4.2 3.6,5.6 6.1,2.7" fill="none" stroke="#fff" stroke-width="1.1" stroke-linecap="round" stroke-linejoin="round"/></svg>
<div class="t" style="left:300.19px;top:230.42px;font-size:6.500px;font-weight:400;color:#626f86;-webkit-text-stroke:0.25px #626f86;letter-spacing:0.240px;">TBT-8</div>
<div class="t" style="left:322.74px;top:229.84px;font-size:7.800px;font-weight:400;color:#44546f;-webkit-text-stroke:0.12px #44546f;letter-spacing:0.008px;">Project management illustrations</div>
<div style="position:absolute;left:499.4px;top:230.2px;width:62.5px;height:8.200000000000017px;background:#e9f2ff;border-radius:1.5px;"></div>
<div class="t" style="left:500.80px;top:231.24px;font-size:5.699px;font-weight:700;color:#0c66e4;white-space:pre;">READY FOR&nbsp; REVIEW</div>
<svg style="position:absolute;left:604.60px;top:227.80px;overflow:visible" width="12.6" height="12.6" viewBox="0 0 100 100"><defs><clipPath id="av8"><circle cx="50" cy="50" r="50"/></clipPath></defs><g clip-path="url(#av8)"><rect width="100" height="100" fill="#e2ded8"/><ellipse cx="50" cy="44" rx="46" ry="46" fill="#b39478"/><ellipse cx="50" cy="58" rx="30" ry="34" fill="#d49a8c"/><ellipse cx="38.0" cy="52.9" rx="5.4" ry="2.7" fill="#6a4236" opacity=".55"/><ellipse cx="62.0" cy="52.9" rx="5.4" ry="2.7" fill="#6a4236" opacity=".55"/><ellipse cx="50" cy="73.3" rx="10.5" ry="3.4" fill="#b0605a" opacity=".5"/></g></svg>
<div class="t" style="left:621.31px;top:230.02px;font-size:7.600px;font-weight:400;color:#44546f;-webkit-text-stroke:0.12px #44546f;letter-spacing:0.006px;">Joshua Williams</div>
<svg style="position:absolute;left:720.60px;top:227.95px;overflow:visible" width="12.3" height="12.3" viewBox="0 0 100 100"><defs><clipPath id="av9"><circle cx="50" cy="50" r="50"/></clipPath></defs><circle cx="50" cy="50" r="58" fill="#fff"/><g clip-path="url(#av9)"><rect width="100" height="100" fill="#e0d8d0"/><ellipse cx="50" cy="44" rx="46" ry="48" fill="#b89878"/><ellipse cx="50" cy="58" rx="30" ry="34" fill="#d4968c"/><ellipse cx="38.0" cy="52.9" rx="5.4" ry="2.7" fill="#6a4236" opacity=".55"/><ellipse cx="62.0" cy="52.9" rx="5.4" ry="2.7" fill="#6a4236" opacity=".55"/><ellipse cx="50" cy="73.3" rx="10.5" ry="3.4" fill="#b0605a" opacity=".5"/></g></svg>
<svg style="position:absolute;left:709.95px;top:227.95px;overflow:visible" width="12.3" height="12.3" viewBox="0 0 100 100"><defs><clipPath id="av10"><circle cx="50" cy="50" r="50"/></clipPath></defs><circle cx="50" cy="50" r="58" fill="#fff"/><g clip-path="url(#av10)"><rect width="100" height="100" fill="#c9cac4"/><ellipse cx="40" cy="38" rx="44" ry="36" fill="#2a1c18"/><ellipse cx="48" cy="58" rx="31" ry="37" fill="#d98c6c"/><ellipse cx="35.6" cy="52.5" rx="5.6" ry="3.0" fill="#6a4236" opacity=".55"/><ellipse cx="60.4" cy="52.5" rx="5.6" ry="3.0" fill="#6a4236" opacity=".55"/><ellipse cx="48" cy="74.7" rx="10.8" ry="3.7" fill="#b0605a" opacity=".5"/></g></svg>
<div style="position:absolute;left:816px;top:225.8px;width:16.299999999999955px;height:16.5px;background:#f7f8f9;border-radius:2px;"></div>
<div style="position:absolute;left:836.8px;top:225.8px;width:16.600000000000023px;height:16.5px;background:#f7f8f9;border-radius:2px;"></div>
<div style="position:absolute;left:819.7px;top:229.7px;width:8.799999999999955px;height:8.800000000000011px;background:#1a9a5a;border-radius:50%;"></div>
<svg style="position:absolute;left:819.7px;top:229.7px;" width="8.8" height="8.8" viewBox="0 0 8.8 8.8"><polyline points="2.5,4.5 3.9,5.9 6.4,3" fill="none" stroke="#fff" stroke-width="1.2" stroke-linecap="round" stroke-linejoin="round"/></svg>
<div style="position:absolute;left:839.9px;top:228.9px;width:10.399999999999977px;height:10.400000000000006px;background:#f22c1f;border-radius:50%;"></div>
<svg style="position:absolute;left:839.9px;top:228.9px;" width="10.4" height="10.4" viewBox="0 0 10.4 10.4"><path d="M3.6 3.6 L6.8 6.8 M6.8 3.6 L3.6 6.8" stroke="#fff" stroke-width="1.25" stroke-linecap="round"/></svg>
<div style="position:absolute;left:287.2px;top:250.3px;width:8.199999999999989px;height:8.199999999999989px;background:#3d8efe;border-radius:1.5px;"></div>
<svg style="position:absolute;left:287.2px;top:250.3px;" width="8.2" height="8.2" viewBox="0 0 8.2 8.2"><polyline points="2.2,4.2 3.6,5.6 6.1,2.7" fill="none" stroke="#fff" stroke-width="1.1" stroke-linecap="round" stroke-linejoin="round"/></svg>
<div class="t" style="left:300.19px;top:250.72px;font-size:6.500px;font-weight:400;color:#626f86;-webkit-text-stroke:0.25px #626f86;letter-spacing:0.240px;">TBT-9</div>
<div class="t" style="left:322.97px;top:250.14px;font-size:7.800px;font-weight:400;color:#44546f;-webkit-text-stroke:0.12px #44546f;letter-spacing:0.006px;">Change-boarding existing users illustrations</div>
<div style="position:absolute;left:499.4px;top:250.5px;width:62.5px;height:8.199999999999989px;background:#e9f2ff;border-radius:1.5px;"></div>
<div class="t" style="left:500.80px;top:251.54px;font-size:5.699px;font-weight:700;color:#0c66e4;white-space:pre;">READY FOR&nbsp; REVIEW</div>
<svg style="position:absolute;left:604.60px;top:248.10px;overflow:visible" width="12.6" height="12.6" viewBox="0 0 100 100"><defs><clipPath id="av11"><circle cx="50" cy="50" r="50"/></clipPath></defs><g clip-path="url(#av11)"><rect width="100" height="100" fill="#237a36"/><ellipse cx="62" cy="24" rx="36" ry="22" fill="#3e2e28"/><ellipse cx="60" cy="56" rx="32" ry="40" fill="#d49a78"/><ellipse cx="47.2" cy="50.0" rx="5.8" ry="3.2" fill="#6a4236" opacity=".55"/><ellipse cx="72.8" cy="50.0" rx="5.8" ry="3.2" fill="#6a4236" opacity=".55"/><ellipse cx="60" cy="74.0" rx="11.2" ry="4.0" fill="#b0605a" opacity=".5"/></g></svg>
<div class="t" style="left:621.08px;top:250.32px;font-size:7.600px;font-weight:400;color:#44546f;-webkit-text-stroke:0.12px #44546f;letter-spacing:0.011px;">Omar Darboe</div>
<svg style="position:absolute;left:720.60px;top:248.25px;overflow:visible" width="12.3" height="12.3" viewBox="0 0 100 100"><defs><clipPath id="av12"><circle cx="50" cy="50" r="50"/></clipPath></defs><circle cx="50" cy="50" r="58" fill="#fff"/><g clip-path="url(#av12)"><rect width="100" height="100" fill="#e0d8d0"/><ellipse cx="50" cy="44" rx="46" ry="48" fill="#b89878"/><ellipse cx="50" cy="58" rx="30" ry="34" fill="#d4968c"/><ellipse cx="38.0" cy="52.9" rx="5.4" ry="2.7" fill="#6a4236" opacity=".55"/><ellipse cx="62.0" cy="52.9" rx="5.4" ry="2.7" fill="#6a4236" opacity=".55"/><ellipse cx="50" cy="73.3" rx="10.5" ry="3.4" fill="#b0605a" opacity=".5"/></g></svg>
<svg style="position:absolute;left:709.95px;top:248.25px;overflow:visible" width="12.3" height="12.3" viewBox="0 0 100 100"><defs><clipPath id="av13"><circle cx="50" cy="50" r="50"/></clipPath></defs><circle cx="50" cy="50" r="58" fill="#fff"/><g clip-path="url(#av13)"><rect width="100" height="100" fill="#c9cac4"/><ellipse cx="40" cy="38" rx="44" ry="36" fill="#2a1c18"/><ellipse cx="48" cy="58" rx="31" ry="37" fill="#d98c6c"/><ellipse cx="35.6" cy="52.5" rx="5.6" ry="3.0" fill="#6a4236" opacity=".55"/><ellipse cx="60.4" cy="52.5" rx="5.6" ry="3.0" fill="#6a4236" opacity=".55"/><ellipse cx="48" cy="74.7" rx="10.8" ry="3.7" fill="#b0605a" opacity=".5"/></g></svg>
<div style="position:absolute;left:718.1px;top:247.3px;width:5.2000000000000455px;height:5.199999999999989px;background:#22a06b;border-radius:50%;box-shadow:0 0 0 0.8px #fff;"></div>
<svg style="position:absolute;left:718.1px;top:247.3px;" width="5.2" height="5.2" viewBox="0 0 5.2 5.2"><polyline points="1.4,2.7 2.3,3.6 3.9,1.8" fill="none" stroke="#fff" stroke-width="0.8" stroke-linecap="round"/></svg>
<div style="position:absolute;left:287.2px;top:270.6px;width:8.199999999999989px;height:8.200000000000045px;background:#3d8efe;border-radius:1.5px;"></div>
<svg style="position:absolute;left:287.2px;top:270.6px;" width="8.2" height="8.2" viewBox="0 0 8.2 8.2"><polyline points="2.2,4.2 3.6,5.6 6.1,2.7" fill="none" stroke="#fff" stroke-width="1.1" stroke-linecap="round" stroke-linejoin="round"/></svg>
<div class="t" style="left:300.19px;top:271.02px;font-size:6.500px;font-weight:400;color:#626f86;-webkit-text-stroke:0.25px #626f86;letter-spacing:0.104px;">TBT-13</div>
<div class="t" style="left:326.14px;top:270.44px;font-size:7.800px;font-weight:400;color:#44546f;-webkit-text-stroke:0.12px #44546f;letter-spacing:-0.000px;">Design cover photo for new project</div>
<div style="position:absolute;left:499.4px;top:270.8px;width:62.5px;height:8.199999999999989px;background:#e9f2ff;border-radius:1.5px;"></div>
<div class="t" style="left:500.80px;top:271.84px;font-size:5.699px;font-weight:700;color:#0c66e4;white-space:pre;">READY FOR&nbsp; REVIEW</div>
<svg style="position:absolute;left:604.60px;top:268.40px;overflow:visible" width="12.6" height="12.6" viewBox="0 0 100 100"><defs><clipPath id="av14"><circle cx="50" cy="50" r="50"/></clipPath></defs><g clip-path="url(#av14)"><rect width="100" height="100" fill="#e8457a"/><ellipse cx="42" cy="46" rx="44" ry="54" fill="#1c1313"/><ellipse cx="42" cy="58" rx="26" ry="34" fill="#dea48c"/><ellipse cx="31.6" cy="52.9" rx="4.7" ry="2.7" fill="#6a4236" opacity=".55"/><ellipse cx="52.4" cy="52.9" rx="4.7" ry="2.7" fill="#6a4236" opacity=".55"/><ellipse cx="42" cy="73.3" rx="9.1" ry="3.4" fill="#b0605a" opacity=".5"/></g></svg>
<div class="t" style="left:621.46px;top:270.62px;font-size:7.600px;font-weight:400;color:#44546f;-webkit-text-stroke:0.12px #44546f;letter-spacing:-0.040px;">Alana Song</div>
<svg style="position:absolute;left:720.60px;top:268.55px;overflow:visible" width="12.3" height="12.3" viewBox="0 0 100 100"><defs><clipPath id="av15"><circle cx="50" cy="50" r="50"/></clipPath></defs><circle cx="50" cy="50" r="58" fill="#fff"/><g clip-path="url(#av15)"><rect width="100" height="100" fill="#e0d8d0"/><ellipse cx="50" cy="44" rx="46" ry="48" fill="#b89878"/><ellipse cx="50" cy="58" rx="30" ry="34" fill="#d4968c"/><ellipse cx="38.0" cy="52.9" rx="5.4" ry="2.7" fill="#6a4236" opacity=".55"/><ellipse cx="62.0" cy="52.9" rx="5.4" ry="2.7" fill="#6a4236" opacity=".55"/><ellipse cx="50" cy="73.3" rx="10.5" ry="3.4" fill="#b0605a" opacity=".5"/></g></svg>
<svg style="position:absolute;left:709.95px;top:268.55px;overflow:visible" width="12.3" height="12.3" viewBox="0 0 100 100"><defs><clipPath id="av16"><circle cx="50" cy="50" r="50"/></clipPath></defs><circle cx="50" cy="50" r="58" fill="#fff"/><g clip-path="url(#av16)"><rect width="100" height="100" fill="#c9cac4"/><ellipse cx="40" cy="38" rx="44" ry="36" fill="#2a1c18"/><ellipse cx="48" cy="58" rx="31" ry="37" fill="#d98c6c"/><ellipse cx="35.6" cy="52.5" rx="5.6" ry="3.0" fill="#6a4236" opacity=".55"/><ellipse cx="60.4" cy="52.5" rx="5.6" ry="3.0" fill="#6a4236" opacity=".55"/><ellipse cx="48" cy="74.7" rx="10.8" ry="3.7" fill="#b0605a" opacity=".5"/></g></svg>
<div style="position:absolute;left:718.1px;top:267.6px;width:5.2000000000000455px;height:5.2000000000000455px;background:#22a06b;border-radius:50%;box-shadow:0 0 0 0.8px #fff;"></div>
<svg style="position:absolute;left:718.1px;top:267.6px;" width="5.2" height="5.2" viewBox="0 0 5.2 5.2"><polyline points="1.4,2.7 2.3,3.6 3.9,1.8" fill="none" stroke="#fff" stroke-width="0.8" stroke-linecap="round"/></svg>
<div style="position:absolute;left:287.2px;top:290.8px;width:8.199999999999989px;height:8.200000000000045px;background:#23ad6e;border-radius:1.5px;"></div>
<svg style="position:absolute;left:287.2px;top:290.8px;" width="8.2" height="8.2" viewBox="0 0 8.2 8.2"><path d="M4.1 1.9 C5.8 1.9 6.6 2.7 6.6 3.9 C6.6 5.1 5.8 6 4.1 6 C3.6 6 3.2 5.9 2.8 5.8 L1.7 6.4 L2 5.3 C1.7 4.9 1.6 4.4 1.6 3.9 C1.6 2.7 2.4 1.9 4.1 1.9 Z" fill="#fff"/></svg>
<div class="t" style="left:300.19px;top:291.22px;font-size:6.500px;font-weight:400;color:#626f86;-webkit-text-stroke:0.25px #626f86;letter-spacing:0.264px;">TBT-26</div>
<div class="t" style="left:327.17px;top:290.64px;font-size:7.800px;font-weight:400;color:#44546f;-webkit-text-stroke:0.12px #44546f;letter-spacing:0.004px;">Content for new cover photo</div>
<div style="position:absolute;left:499.4px;top:291.0px;width:62.5px;height:8.199999999999989px;background:#e9f2ff;border-radius:1.5px;"></div>
<div class="t" style="left:500.80px;top:292.04px;font-size:5.699px;font-weight:700;color:#0c66e4;white-space:pre;">READY FOR&nbsp; REVIEW</div>
<svg style="position:absolute;left:604.60px;top:288.60px;overflow:visible" width="12.6" height="12.6" viewBox="0 0 100 100"><defs><clipPath id="av17"><circle cx="50" cy="50" r="50"/></clipPath></defs><g clip-path="url(#av17)"><rect width="100" height="100" fill="#e8457a"/><ellipse cx="42" cy="46" rx="44" ry="54" fill="#1c1313"/><ellipse cx="42" cy="58" rx="26" ry="34" fill="#dea48c"/><ellipse cx="31.6" cy="52.9" rx="4.7" ry="2.7" fill="#6a4236" opacity=".55"/><ellipse cx="52.4" cy="52.9" rx="4.7" ry="2.7" fill="#6a4236" opacity=".55"/><ellipse cx="42" cy="73.3" rx="9.1" ry="3.4" fill="#b0605a" opacity=".5"/></g></svg>
<div class="t" style="left:621.46px;top:290.82px;font-size:7.600px;font-weight:400;color:#44546f;-webkit-text-stroke:0.12px #44546f;letter-spacing:-0.040px;">Alana Song</div>
<svg style="position:absolute;left:741.90px;top:288.75px;overflow:visible" width="12.3" height="12.3" viewBox="0 0 100 100"><defs><clipPath id="av18"><circle cx="50" cy="50" r="50"/></clipPath></defs><circle cx="50" cy="50" r="58" fill="#fff"/><g clip-path="url(#av18)"><rect width="100" height="100" fill="#c9a468"/><ellipse cx="50" cy="42" rx="40" ry="44" fill="#3a2b25"/><ellipse cx="50" cy="58" rx="27" ry="34" fill="#c99070"/><ellipse cx="39.2" cy="52.9" rx="4.9" ry="2.7" fill="#6a4236" opacity=".55"/><ellipse cx="60.8" cy="52.9" rx="4.9" ry="2.7" fill="#6a4236" opacity=".55"/><ellipse cx="50" cy="73.3" rx="9.4" ry="3.4" fill="#b0605a" opacity=".5"/></g></svg>
<svg style="position:absolute;left:731.25px;top:288.75px;overflow:visible" width="12.3" height="12.3" viewBox="0 0 100 100"><defs><clipPath id="av19"><circle cx="50" cy="50" r="50"/></clipPath></defs><circle cx="50" cy="50" r="58" fill="#fff"/><g clip-path="url(#av19)"><rect width="100" height="100" fill="#a9aba9"/><ellipse cx="44" cy="26" rx="36" ry="20" fill="#1e1e21"/><ellipse cx="46" cy="60" rx="30" ry="36" fill="#e0b49c"/><ellipse cx="34.0" cy="54.6" rx="5.4" ry="2.9" fill="#6a4236" opacity=".55"/><ellipse cx="58.0" cy="54.6" rx="5.4" ry="2.9" fill="#6a4236" opacity=".55"/><ellipse cx="46" cy="76.2" rx="10.5" ry="3.6" fill="#b0605a" opacity=".5"/></g></svg>
<svg style="position:absolute;left:720.60px;top:288.75px;overflow:visible" width="12.3" height="12.3" viewBox="0 0 100 100"><defs><clipPath id="av20"><circle cx="50" cy="50" r="50"/></clipPath></defs><circle cx="50" cy="50" r="58" fill="#fff"/><g clip-path="url(#av20)"><rect width="100" height="100" fill="#b9b5ae"/><ellipse cx="46" cy="30" rx="38" ry="24" fill="#1c1a1d"/><ellipse cx="48" cy="58" rx="30" ry="36" fill="#b07a66"/><ellipse cx="36.0" cy="52.6" rx="5.4" ry="2.9" fill="#6a4236" opacity=".55"/><ellipse cx="60.0" cy="52.6" rx="5.4" ry="2.9" fill="#6a4236" opacity=".55"/><ellipse cx="48" cy="74.2" rx="10.5" ry="3.6" fill="#b0605a" opacity=".5"/></g></svg>
<svg style="position:absolute;left:709.95px;top:288.75px;overflow:visible" width="12.3" height="12.3" viewBox="0 0 100 100"><defs><clipPath id="av21"><circle cx="50" cy="50" r="50"/></clipPath></defs><circle cx="50" cy="50" r="58" fill="#fff"/><g clip-path="url(#av21)"><rect width="100" height="100" fill="#8c3418"/><ellipse cx="40" cy="26" rx="34" ry="20" fill="#7a665c"/><ellipse cx="44" cy="57" rx="33" ry="40" fill="#d98558"/><ellipse cx="30.8" cy="51.0" rx="5.9" ry="3.2" fill="#6a4236" opacity=".55"/><ellipse cx="57.2" cy="51.0" rx="5.9" ry="3.2" fill="#6a4236" opacity=".55"/><ellipse cx="44" cy="75.0" rx="11.5" ry="4.0" fill="#b0605a" opacity=".5"/></g></svg>
<div style="position:absolute;left:739.4px;top:287.8px;width:5.2000000000000455px;height:5.2000000000000455px;background:#22a06b;border-radius:50%;box-shadow:0 0 0 0.8px #fff;"></div>
<svg style="position:absolute;left:739.4px;top:287.8px;" width="5.2" height="5.2" viewBox="0 0 5.2 5.2"><polyline points="1.4,2.7 2.3,3.6 3.9,1.8" fill="none" stroke="#fff" stroke-width="0.8" stroke-linecap="round"/></svg>
</body></html>
